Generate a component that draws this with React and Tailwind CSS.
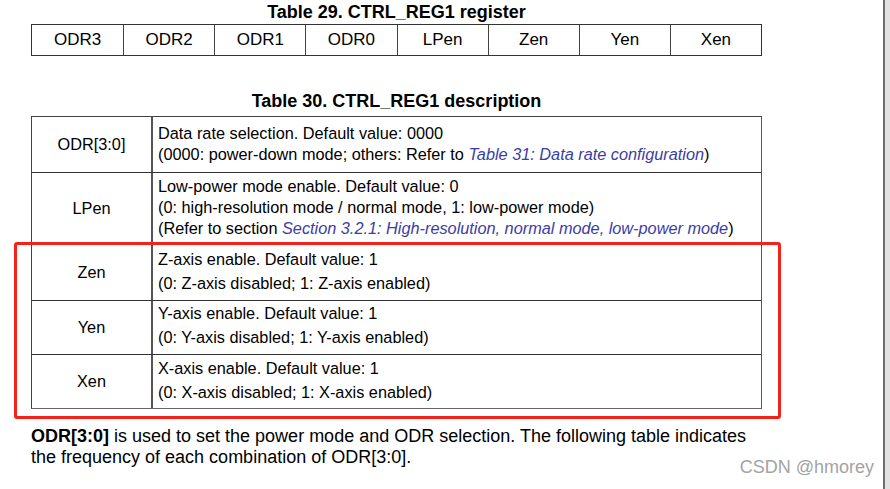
import React from "react";

const F = { fontFamily: '"Liberation Sans", Arial, sans-serif' };

function Link({ children }) {
  return <span className="italic text-[#3c3ca6]">{children}</span>;
}

export default function App() {
  const bits = ["ODR3", "ODR2", "ODR1", "ODR0", "LPen", "Zen", "Yen", "Xen"];
  const rows = [
    {
      name: "ODR[3:0]",
      h: "h-[55px]",
      pt: "pt-[6px]",
      lh: "leading-[21px]",
      lines: [
        "Data rate selection. Default value: 0000",
        <>
          (0000: power-down mode; others: Refer to{" "}
          <Link>Table 31: Data rate configuration</Link>)
        </>,
      ],
    },
    {
      name: "LPen",
      h: "h-[72px]",
      pt: "pt-[3px]",
      lh: "leading-[21px]",
      lines: [
        "Low-power mode enable. Default value: 0",
        "(0: high-resolution mode / normal mode, 1: low-power mode)",
        <>
          (Refer to section{" "}
          <Link>Section 3.2.1: High-resolution, normal mode, low-power mode</Link>)
        </>,
      ],
    },
    {
      name: "Zen",
      h: "h-[56px]",
      pt: "pt-[2px]",
      lh: "leading-[24px]",
      lines: ["Z-axis enable. Default value: 1", "(0: Z-axis disabled; 1: Z-axis enabled)"],
    },
    {
      name: "Yen",
      h: "h-[54px]",
      pt: "pt-[0px]",
      lh: "leading-[24px]",
      lines: ["Y-axis enable. Default value: 1", "(0: Y-axis disabled; 1: Y-axis enabled)"],
    },
    {
      name: "Xen",
      h: "h-[54px]",
      pt: "pt-[1px]",
      lh: "leading-[24px]",
      lines: ["X-axis enable. Default value: 1", "(0: X-axis disabled; 1: X-axis enabled)"],
    },
  ];

  return (
    <div className="flex h-[489px] w-[890px] overflow-hidden bg-white text-black" style={F}>
      <div className="relative flex-1">
        <div className="ml-[31px] w-[731px]">
          <div className="pt-[1px] text-center text-[18px] font-bold leading-[22px]">
            Table 29. CTRL_REG1 register
          </div>
          <div className="mt-[1px] grid h-[32px] grid-cols-8 border border-[#333]">
            {bits.map((b, i) => (
              <div
                key={b}
                className={`flex items-center justify-center text-[17px] ${i > 0 ? "border-l border-[#444]" : ""}`}
              >
                {b}
              </div>
            ))}
          </div>
          <div className="mt-[34px] text-center text-[18px] font-bold leading-[22px]">
            Table 30. CTRL_REG1 description
          </div>
          <div className="mt-[4px] border border-[#444] border-b-[#666] border-r-[#555]">
            {rows.map((r, i) => (
              <div
                key={r.name}
                className={`grid grid-cols-[121px_1fr] ${r.h} ${i > 0 ? "border-t border-[#333]" : ""}`}
              >
                <div className="flex items-center justify-center border-r-2 border-[#555] text-[16.3px]">
                  {r.name}
                </div>
                <div className={`pl-[5px] ${r.pt} ${r.lh} text-[16.3px]`}>
                  {r.lines.map((l, j) => (
                    <div key={j} className="whitespace-nowrap">
                      {l}
                    </div>
                  ))}
                </div>
              </div>
            ))}
          </div>
          <div className="mt-[17px] text-[18px] leading-[21px]">
            <span className="font-bold">ODR[3:0]</span> is used to set the power mode and ODR selection. The following table indicates
            <br />
            the frequency of each combination of ODR[3:0].
          </div>
        </div>
        <div className="pointer-events-none absolute left-[14px] top-[242px] h-[177px] w-[767px] rounded-[3px] border-[3px] border-[#f5221b]" />
        <div className="absolute right-[9px] top-[456px] text-[18px] leading-[22px] text-[#a3a3a3]">
          CSDN @hmorey
        </div>
      </div>
      <div className="w-[7px] border-l-2 border-[#6e6e6e] bg-[#e2e2e2]" />
    </div>
  );
}
